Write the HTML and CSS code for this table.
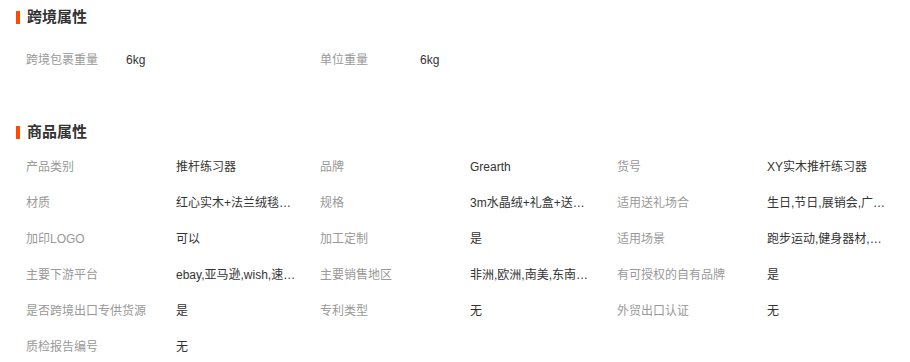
FILE: index.html
```html
<!DOCTYPE html>
<html lang="zh">
<head>
<meta charset="utf-8">
<link rel="stylesheet" href="styles.css">
</head>
<body>
<div class="page">
  <h2 class="title"><span class="bar"></span>跨境属性</h2>
  <div class="grid grid-two">
    <div class="pair short"><span class="label">跨境包裹重量</span><span class="value">6kg</span></div>
    <div class="pair short"><span class="label">单位重量</span><span class="value">6kg</span></div>
  </div>

  <h2 class="title title-second"><span class="bar"></span>商品属性</h2>
  <div class="grid grid-three">
    <div class="pair"><span class="label">产品类别</span><span class="value">推杆练习器</span></div>
    <div class="pair"><span class="label">品牌</span><span class="value">Grearth</span></div>
    <div class="pair"><span class="label">货号</span><span class="value">XY实木推杆练习器</span></div>

    <div class="pair"><span class="label">材质</span><span class="value">红心实木+法兰绒毯+礼盒包装</span></div>
    <div class="pair"><span class="label">规格</span><span class="value">3m水晶绒+礼盒+送5球</span></div>
    <div class="pair"><span class="label">适用送礼场合</span><span class="value">生日,节日,展销会,广告促销</span></div>

    <div class="pair"><span class="label">加印LOGO</span><span class="value">可以</span></div>
    <div class="pair"><span class="label">加工定制</span><span class="value">是</span></div>
    <div class="pair"><span class="label">适用场景</span><span class="value">跑步运动,健身器材,健身房</span></div>

    <div class="pair"><span class="label">主要下游平台</span><span class="value">ebay,亚马逊,wish,速卖通</span></div>
    <div class="pair"><span class="label">主要销售地区</span><span class="value">非洲,欧洲,南美,东南亚,中东</span></div>
    <div class="pair"><span class="label">有可授权的自有品牌</span><span class="value">是</span></div>

    <div class="pair"><span class="label">是否跨境出口专供货源</span><span class="value">是</span></div>
    <div class="pair"><span class="label">专利类型</span><span class="value">无</span></div>
    <div class="pair"><span class="label">外贸出口认证</span><span class="value">无</span></div>

    <div class="pair"><span class="label">质检报告编号</span><span class="value">无</span></div>
  </div>
</div>
</body>
</html>
```

FILE: styles.css
```css
html, body {
  margin: 0;
  padding: 0;
  background: #fff;
}

body {
  font-family: "Liberation Sans", "Noto Sans CJK SC", sans-serif;
  font-size: 12px;
  color: #333;
}

.page {
  padding-top: 5px;
}

.title {
  display: flex;
  align-items: center;
  gap: 7px;
  margin: 0 0 0 16px;
  height: 24px;
  line-height: 24px;
  font-size: 15px;
  font-weight: bold;
  color: #333;
}

.bar {
  width: 4px;
  height: 13px;
  background: #ff4a00;
}

.title-second {
  margin-top: 42px;
}

.grid {
  display: grid;
  padding-left: 26px;
}

.grid-two {
  margin-top: 13px;
  grid-template-columns: 294px 1fr;
}

.grid-three {
  margin-top: 5px;
  grid-template-columns: 294px 297px 1fr;
}

.pair {
  display: flex;
  align-items: center;
  height: 36px;
  line-height: 18px;
}

.label {
  flex: 0 0 150px;
  color: #999;
  white-space: nowrap;
}

.short .label {
  flex-basis: 100px;
}

.value {
  width: 121px;
  white-space: nowrap;
  overflow: hidden;
  text-overflow: ellipsis;
  color: #333;
}
```
